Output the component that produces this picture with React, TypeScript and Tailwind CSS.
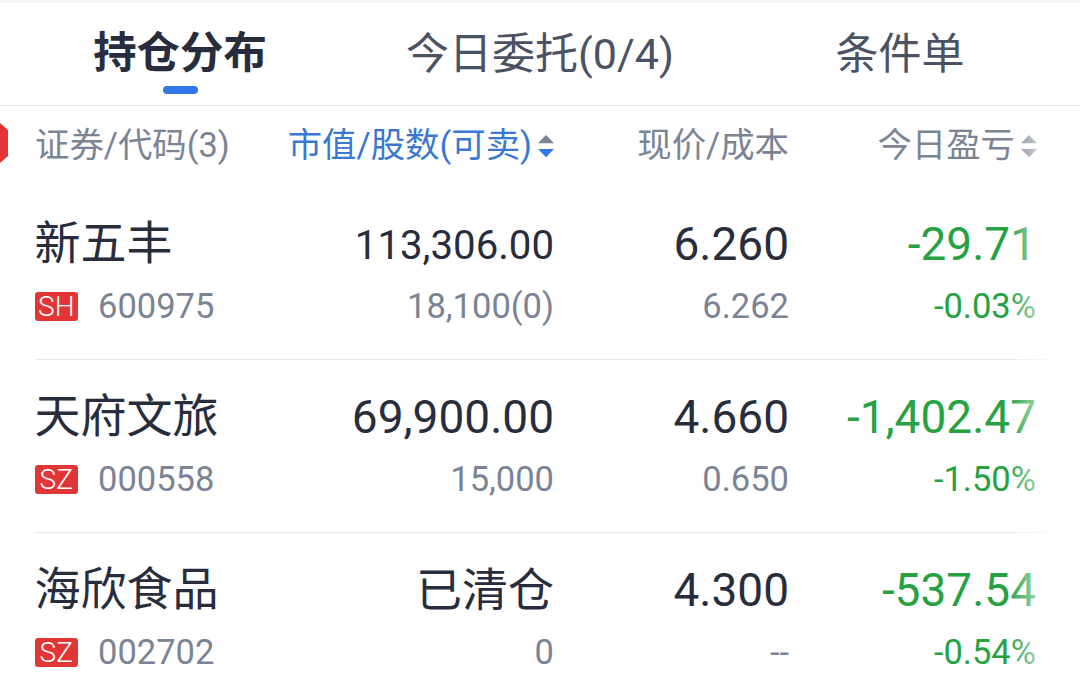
import clsx from 'clsx';

interface Holding {
    name: string;
    market: string;
    code: string;
    value: string;
    shares: string;
    price: string;
    cost: string;
    profit: string;
    rate: string;
}

const holdings: Holding[] = [
    { name: '新五丰', market: 'SH', code: '600975', value: '113,306.00', shares: '18,100(0)', price: '6.260', cost: '6.262', profit: '-29.71', rate: '-0.03%' },
    { name: '天府文旅', market: 'SZ', code: '000558', value: '69,900.00', shares: '15,000', price: '4.660', cost: '0.650', profit: '-1,402.47', rate: '-1.50%' },
    { name: '海欣食品', market: 'SZ', code: '002702', value: '已清仓', shares: '0', price: '4.300', cost: '--', profit: '-537.54', rate: '-0.54%' },
];

function SortArrows({ className }: { className?: string }) {
    return (
        <svg width="16" height="24" viewBox="0 0 16 24" className={clsx('shrink-0', className)}>
            <path d="M8 1 L16 9.3 H0 Z" fill="#7b8494" />
            <path d="M0 15 H16 L8 23.3 Z" fill="currentColor" />
        </svg>
    );
}

function HoldingRow({ item }: { item: Holding }) {
    // Long amounts shrink so they stay inside the column
    const longValue = item.value.length > 9;

    return (
        <div className="flex h-[172px] pt-[23px]">
            <div className="w-[240px]">
                <div className="-ml-[0.5px] h-[68px] text-[46px] leading-[67px] whitespace-nowrap">{item.name}</div>
                <div className="flex h-[57px] items-center">
                    <span className="-ml-[0.5px] flex h-[29px] w-[43.5px] items-center justify-center rounded-[3px] bg-[#e23636] text-[28px] font-light text-white">{item.market}</span>
                    <span className="ml-[20px] text-[34.5px] text-[#7b8494]">{item.code}</span>
                </div>
            </div>
            <div className="w-[279px] text-right">
                <div className={clsx('h-[68px]', longValue ? 'text-[40.2px] leading-[71px]' : 'text-[46px] leading-[68px]')}>{item.value}</div>
                <div className="h-[56px] text-[34.5px] leading-[56px] text-[#7b8494]">{item.shares}</div>
            </div>
            <div className="w-[235px] text-right">
                <div className="h-[68px] text-[46px] leading-[68px]">{item.price}</div>
                <div className="h-[56px] text-[34.5px] leading-[56px] text-[#7b8494]">{item.cost}</div>
            </div>
            <div className="w-[247px] text-right text-[#27a243]">
                <div className="h-[68px] text-[46px] leading-[68px]">{item.profit}</div>
                <div className="h-[56px] text-[34.5px] leading-[56px]">{item.rate}</div>
            </div>
        </div>
    );
}

export default function App() {
    return (
        <div className="relative h-[697px] w-[1080px] overflow-hidden bg-white font-[Roboto,'Noto_Sans_CJK_SC',sans-serif] text-[#272d3d]">
            <div className="h-[3px] bg-[#f3f4f8]" />
            <nav className="flex h-[103px] border-b border-[#e8e8ea] text-[43px] leading-[100px] text-[#4a5263]">
                <button className="flex w-[360px] flex-col items-center font-bold text-[#272d3d]">
                    <span className="h-[83px] text-[43.4px] leading-[102px]">持仓分布</span>
                    <span className="h-2 w-[35px] rounded-full bg-[#3077e8]" />
                </button>
                <button className="w-[360px]">今日委托(0/4)</button>
                <button className="w-[360px]">条件单</button>
            </nav>
            <div className="flex h-[81px] items-start pl-[35px] text-[34.4px] leading-[79px] whitespace-nowrap text-[#7b8494]">
                <span className="w-[240px]">证券/代码(3)</span>
                <span className="flex w-[279px] items-center justify-end gap-[6px] text-[#3a77d3]">
                    市值/股数(可卖)
                    <SortArrows className="text-[#3077e8]" />
                </span>
                <span className="w-[235px] text-right">现价/成本</span>
                <span className="flex w-[248px] items-center justify-end gap-[6px]">
                    今日盈亏
                    <SortArrows />
                </span>
            </div>
            <main className="pl-[35px]">
                {holdings.map((item) => (
                    <div key={item.code} className="w-[1020px] border-b border-[#e8e8ea]">
                        <HoldingRow item={item} />
                    </div>
                ))}
            </main>
            <div className="absolute top-[107px] right-[18px] h-[590px] w-[54px] bg-linear-to-r from-white/0 to-white" />
            <div className="absolute top-[107px] right-0 h-[590px] w-[18px] bg-white" />
            {/* Handle of the side drawer */}
            <svg width="8" height="40" viewBox="0 0 8 40" className="absolute top-[123px] left-0">
                <path d="M0 0 L8 7 V33 L0 40 Z" fill="#e23636" />
            </svg>
        </div>
    );
}
